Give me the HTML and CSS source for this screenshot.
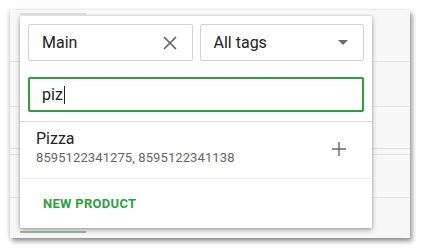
FILE: index.html
```html
<!DOCTYPE html>
<html lang="en">
<head>
    <meta charset="UTF-8">
    <meta name="viewport" content="width=device-width, initial-scale=1.0">
    <title>Product picker</title>
    <link rel="stylesheet" href="styles.css">
</head>
<body>
    <!-- Window behind the popup -->
    <div class="window">
        <div class="tab-line"></div>
        <div class="bg-row bg-row-1"></div>
        <div class="bg-row bg-row-2"></div>
        <div class="bg-row bg-row-3"></div>
        <div class="bg-row bg-row-4"></div>
        <div class="tab-line tab-line-bottom"></div>

        <!-- Popup with the product search -->
        <div class="popup">
            <div class="popup-head">
                <div class="filter-row">
                    <div class="field">
                        <span class="field-text">Main</span>
                        <svg class="clear-icon" width="14" height="14" viewBox="0 0 14 14">
                            <path d="M1 1 L13 13 M13 1 L1 13" stroke="#5f5f5f" stroke-width="1.6" fill="none"/>
                        </svg>
                    </div>
                    <div class="field">
                        <span class="field-text">All tags</span>
                        <svg class="arrow-icon" width="10" height="5" viewBox="0 0 10 5">
                            <path d="M0 0 L10 0 L5 5 Z" fill="#6b6b6b"/>
                        </svg>
                    </div>
                </div>
                <div class="search">
                    <span class="search-text">piz</span><span class="caret"></span>
                </div>
            </div>

            <div class="result">
                <div class="result-info">
                    <div class="result-name">Pizza</div>
                    <div class="result-codes">8595122341275, 8595122341138</div>
                </div>
                <svg class="add-icon" width="14" height="14" viewBox="0 0 14 14">
                    <path d="M7 0 V14 M0 7 H14" stroke="#666" stroke-width="1.4" fill="none"/>
                </svg>
            </div>

            <div class="popup-foot">
                <button class="new-button">NEW PRODUCT</button>
            </div>
        </div>
    </div>
</body>
</html>
```

FILE: styles.css
```css
body {
    margin: 0;
    padding: 10px;
    background: #ffffff;
    font-family: Roboto, "Noto Sans", Arial, sans-serif;
}
.window {
    position: relative;
    width: 400px;
    height: 228px;
    background: #f7f7f7;
    box-shadow: 2px 3px 5px rgba(0, 0, 0, 0.45), -2px 0 4px rgba(0, 0, 0, 0.08);
}
.tab-line {
    height: 2px;
    width: 66px;
    margin-left: 10px;
    background: #d6e8d6;
    transform: translateY(3px);
}
.tab-line-bottom {
    position: absolute;
    left: 0;
    bottom: 8px;
    background: #9fbfa1;
}
.bg-row {
    position: absolute;
    left: 0;
    right: 0;
    height: 1px;
    background: #e2e2e2;
}
.bg-row-1 { top: 51px; }
.bg-row-2 { top: 96px; }
.bg-row-3 { top: 138px; height: 5px; background: none; border-top: 1px solid #e0e0e0; border-bottom: 1px solid #e0e0e0; }
.bg-row-4 { top: 187px; }

/* popup card */
.popup {
    position: absolute;
    left: 10px;
    top: 6px;
    width: 352px;
    height: 212px;
    background: #ffffff;
    box-shadow: 0 2px 5px rgba(0, 0, 0, 0.35), 0 0 2px rgba(0, 0, 0, 0.12);
    display: flex;
    flex-direction: column;
}
.popup-head {
    padding: 8px 8px 9px 8px;
    border-bottom: 1px solid #dcdcdc;
}
.filter-row {
    display: flex;
    gap: 7px;
}
.field {
    flex: 1;
    height: 37px;
    box-sizing: border-box;
    border: 1px solid #d2d2d2;
    border-radius: 2px;
    padding: 0 15px 0 13px;
    display: flex;
    align-items: center;
    justify-content: space-between;
}
.field-text {
    font-size: 16px;
    color: #222;
}
.search {
    margin-top: 16px;
    height: 35px;
    box-sizing: border-box;
    border: 2px solid #2e9e3e;
    border-radius: 2px;
    padding: 0 12px;
    display: flex;
    align-items: center;
}
.search-text {
    font-size: 16px;
    color: #222;
}
.caret {
    width: 1px;
    height: 18px;
    background: #222;
    margin-left: 1px;
}

/* search result */
.result {
    height: 57px;
    box-sizing: border-box;
    padding: 0 26px 6px 16px;
    border-bottom: 1px solid #eeeeee;
    display: flex;
    align-items: center;
    justify-content: space-between;
}
.result-name {
    font-size: 16px;
    color: #222;
}
.result-codes {
    font-size: 13px;
    color: #666;
    margin-top: 2px;
    letter-spacing: 0.1px;
}
.add-icon {
    margin-top: 4px;
}

.popup-foot {
    flex: 1;
    display: flex;
    align-items: center;
    padding-left: 15px;
}
.new-button {
    background: none;
    border: none;
    padding: 6px 8px;
    font-family: Roboto, "Noto Sans", Arial, sans-serif;
    font-size: 13px;
    font-weight: 700;
    color: #2e9e3e;
    letter-spacing: 0.3px;
    cursor: pointer;
}
```
